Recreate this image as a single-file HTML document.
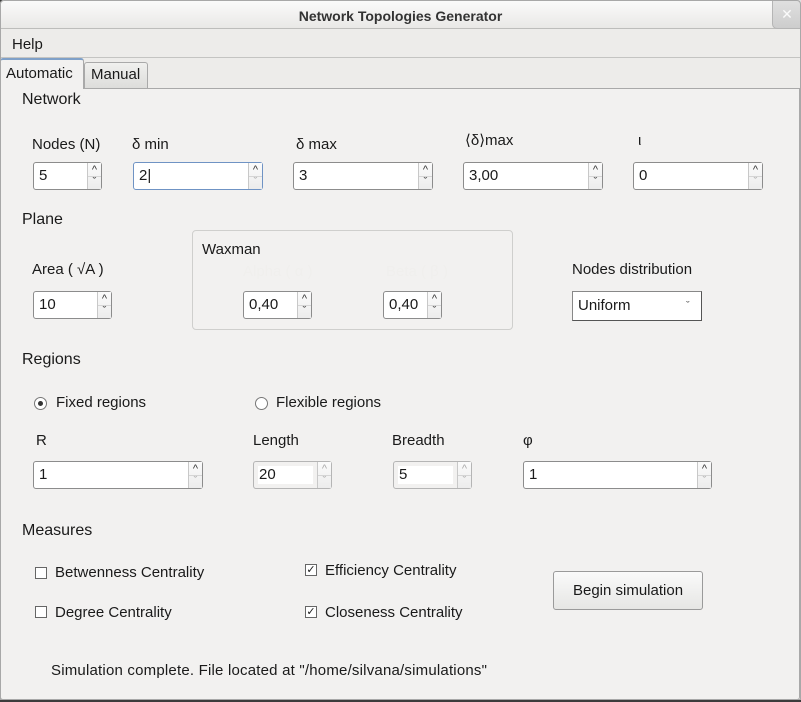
<!DOCTYPE html>
<html><head><meta charset="utf-8">
<style>
*{box-sizing:border-box;margin:0;padding:0}
body{width:801px;height:702px;background:#3c3c3c;font-family:"Liberation Sans","DejaVu Sans",sans-serif;font-size:15px;color:#1a1a1a;position:relative;overflow:hidden}
.a{position:absolute;white-space:nowrap;line-height:16px}
#win{position:absolute;left:0;top:0;width:801px;height:700px;background:#edecea;border-radius:4px 4px 0 0}
#frame{position:absolute;left:0;top:0;width:801px;height:700px;border:1px solid #a8a8a8;border-radius:4px 4px 0 0;pointer-events:none}
#title{position:absolute;left:0;top:0;width:801px;height:29px;background:linear-gradient(#fbfbfb,#e9e8e6);border-bottom:1px solid #bdbdbb;border-radius:4px 4px 0 0}
#close{position:absolute;left:772px;top:0;width:29px;height:29px;background:linear-gradient(#e0e0e0,#cdcdcd);border-left:1px solid #b5b5b5;border-bottom:1px solid #b5b5b5;border-radius:0 0 0 5px;color:#fafafa;font-weight:bold;text-align:center;line-height:28px;font-size:14px}
#pane{position:absolute;left:0;top:88px;width:800px;height:612px;background:#f2f1f0;border:1px solid #a9a9a9;border-radius:0 0 3px 3px}
.tab{position:absolute;border:1px solid #a9a9a9;border-bottom:none;border-radius:3px 3px 0 0}
.sp{position:absolute;height:28px;background:#fff;border:1px solid #8c8c8c;border-radius:3px}
.sp .v{position:absolute;left:5px;top:5px;line-height:16px}
.sp .ar{position:absolute;right:0;top:0;width:14px;height:26px;border-left:1px solid #c8c8c8;background:linear-gradient(#fbfbfb,#ececec);font-size:11px;color:#333;text-align:center;line-height:14px}
.sp .ar i{display:block;font-style:normal;height:13px;overflow:hidden}
.sp .ar i+i{border-top:1px solid #d5d5d5;line-height:10px}
.sp.dis{background:#f2f1f0;border-color:#b5b5b5}
.sp.dis .in{position:absolute;left:4px;top:4px;right:18px;bottom:4px;background:#fff}
.sp .ar .g{color:#aaa}
.rb{position:absolute;width:13px;height:13px;border:1px solid #777;border-radius:50%;background:#fff}
.cb{position:absolute;width:12px;height:12px;border:1px solid #666;background:#fff;font-size:11px;line-height:10px;text-align:center}
</style></head><body>
<div id="win">
<div id="title"></div>
<div class="a" style="left:0;width:801px;text-align:center;top:8px;font-weight:bold;color:#333;font-size:14px">Network Topologies Generator</div>
<div id="close">✕</div>
<div class="a" style="left:12px;top:37px">Help</div>
<div style="position:absolute;left:0;top:57px;width:801px;height:1px;background:#c4c4c2"></div>
<div class="tab" style="left:84px;top:62px;width:64px;height:27px;background:linear-gradient(#f0f0ee,#dcdcda)"></div>
<div class="a" style="left:91px;top:67px">Manual</div>
<div id="pane"></div>
<div class="tab" style="left:0;top:58px;width:84px;height:31px;background:#f2f1f0;border-top:2px solid #7fa0c8"></div>
<div class="a" style="left:6px;top:66px">Automatic</div>

<div class="a" style="left:22px;top:92px;font-size:16px">Network</div>
<div class="a" style="left:32px;top:137px">Nodes (N)</div>
<div class="a" style="left:132px;top:137px">δ min</div>
<div class="a" style="left:296px;top:137px">δ max</div>
<div class="a" style="left:465px;top:133px">⟨δ⟩max</div>
<div class="a" style="left:638px;top:133px">ι</div>
<div class="sp" style="left:33px;top:162px;width:69px"><span class="v">5</span><div class="ar"><i>^</i><i>ˇ</i></div></div>
<div class="sp" style="left:133px;top:162px;width:130px;border-color:#6f93c4"><span class="v">2|</span><div class="ar"><i>^</i><i class="g">ˇ</i></div></div>
<div class="sp" style="left:293px;top:162px;width:140px"><span class="v">3</span><div class="ar"><i>^</i><i>ˇ</i></div></div>
<div class="sp" style="left:463px;top:162px;width:140px"><span class="v">3,00</span><div class="ar"><i>^</i><i>ˇ</i></div></div>
<div class="sp" style="left:633px;top:162px;width:130px"><span class="v">0</span><div class="ar"><i>^</i><i class="g">ˇ</i></div></div>

<div class="a" style="left:22px;top:212px;font-size:16px">Plane</div>
<div class="a" style="left:32px;top:262px">Area ( √A )</div>
<div class="sp" style="left:33px;top:291px;width:79px"><span class="v">10</span><div class="ar"><i>^</i><i>ˇ</i></div></div>
<div style="position:absolute;left:192px;top:230px;width:321px;height:100px;border:1px solid #cfcfcd;border-radius:4px"></div>
<div class="a" style="left:202px;top:242px">Waxman</div>
<div class="a" style="left:243px;top:264px;color:#f0efed">Alpha ( α )</div>
<div class="a" style="left:386px;top:264px;color:#f0efed">Beta ( β )</div>
<div class="sp" style="left:243px;top:291px;width:69px"><span class="v">0,40</span><div class="ar"><i>^</i><i>ˇ</i></div></div>
<div class="sp" style="left:383px;top:291px;width:59px"><span class="v">0,40</span><div class="ar"><i>^</i><i>ˇ</i></div></div>
<div class="a" style="left:572px;top:262px">Nodes distribution</div>
<div style="position:absolute;left:572px;top:291px;width:130px;height:30px;background:#fff;border:1px solid #888;border-right-color:#555;border-bottom-color:#555"></div>
<div class="a" style="left:578px;top:298px">Uniform</div>
<div class="a" style="left:686px;top:298px;font-size:11px;color:#555">ˇ</div>

<div class="a" style="left:22px;top:352px;font-size:16px">Regions</div>
<div class="rb" style="left:34px;top:397px"></div>
<div style="position:absolute;left:38px;top:401px;width:5px;height:5px;border-radius:50%;background:#333"></div>
<div class="a" style="left:56px;top:395px">Fixed regions</div>
<div class="rb" style="left:255px;top:397px"></div>
<div class="a" style="left:276px;top:395px">Flexible regions</div>
<div class="a" style="left:36px;top:433px">R</div>
<div class="a" style="left:253px;top:433px">Length</div>
<div class="a" style="left:392px;top:433px">Breadth</div>
<div class="a" style="left:523px;top:433px">φ</div>
<div class="sp" style="left:33px;top:461px;width:170px"><span class="v">1</span><div class="ar"><i>^</i><i class="g">ˇ</i></div></div>
<div class="sp dis" style="left:253px;top:461px;width:79px"><div class="in"></div><span class="v" style="left:5px">20</span><div class="ar"><i class="g">^</i><i class="g">ˇ</i></div></div>
<div class="sp dis" style="left:393px;top:461px;width:79px"><div class="in"></div><span class="v" style="left:5px">5</span><div class="ar"><i class="g">^</i><i class="g">ˇ</i></div></div>
<div class="sp" style="left:523px;top:461px;width:189px"><span class="v">1</span><div class="ar"><i>^</i><i class="g">ˇ</i></div></div>

<div class="a" style="left:22px;top:523px;font-size:16px">Measures</div>
<div class="cb" style="left:35px;top:567px"></div>
<div class="a" style="left:55px;top:565px">Betwenness Centrality</div>
<div class="cb" style="left:35px;top:606px"></div>
<div class="a" style="left:55px;top:605px">Degree Centrality</div>
<div class="cb" style="left:305px;top:564px">✓</div>
<div class="a" style="left:325px;top:563px">Efficiency Centrality</div>
<div class="cb" style="left:305px;top:606px">✓</div>
<div class="a" style="left:325px;top:605px">Closeness Centrality</div>
<div style="position:absolute;left:553px;top:571px;width:150px;height:39px;border:1px solid #9a9a9a;border-radius:3px;background:linear-gradient(#fafafa,#e6e6e4)"></div>
<div class="a" style="left:553px;top:583px;width:150px;text-align:center">Begin simulation</div>

<div class="a" style="left:51px;top:663px;letter-spacing:0.2px">Simulation complete. File located at "/home/silvana/simulations"</div>
<div id="frame"></div>
</div>
</body></html>
